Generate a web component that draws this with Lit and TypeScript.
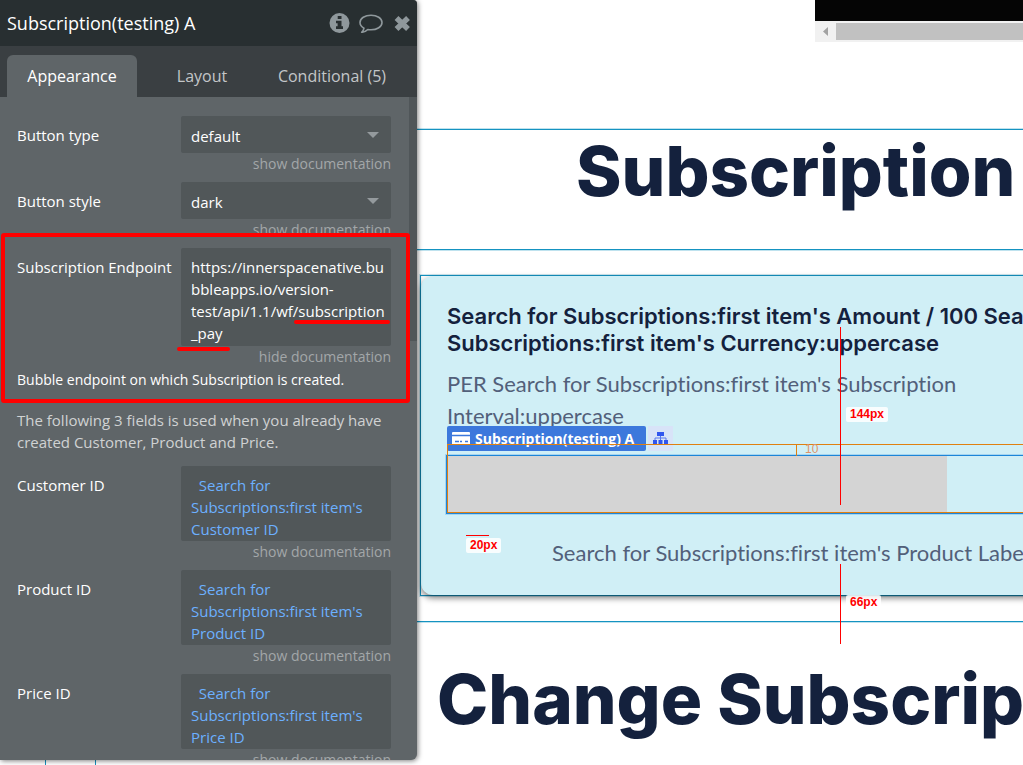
import { LitElement, html, css } from "lit";
import { customElement, property } from "lit/decorators.js";

@customElement("property-editor")
class PropertyEditor extends LitElement {
  static styles = css`
    :host {
      display: flex;
      flex-direction: column;
      position: relative;
      overflow: hidden;
      background: #5f6568;
      border-radius: 0 4px 6px 0;
      box-shadow: 1px 1px 5px rgba(0, 0, 0, 0.5);
      font-family: "Open Sans", sans-serif;
      font-size: 15px;
      line-height: 22px;
      color: #fff;
    }
    * {
      box-sizing: border-box;
    }
    button,
    select,
    textarea {
      font: inherit;
      color: inherit;
      border: 0;
      margin: 0;
      background: none;
    }
    .head {
      display: flex;
      align-items: center;
      height: 46px;
      flex: none;
      padding: 0 5px 0 7px;
      background: #282f31;
    }
    .title {
      flex: 1;
      margin: 0;
      font-size: 18px;
      font-weight: 400;
    }
    .tools {
      display: flex;
      align-items: center;
      gap: 9px;
    }
    .tool {
      display: flex;
      padding: 0;
      color: #8f989c;
    }
    .tabs {
      display: flex;
      align-items: flex-end;
      height: 51px;
      flex: none;
      padding: 0 7px;
      background: #3a3f42;
    }
    .tab {
      width: 130px;
      height: 42px;
      padding: 0;
      font-size: 16px;
      color: #c3c6c8;
      white-space: nowrap;
      border-radius: 6px 6px 0 0;
    }
    .tab.on {
      background: #5f6568;
      color: #fff;
    }
    .body {
      position: relative;
      flex: 1;
      min-height: 0;
      overflow: hidden;
      padding: 19px 26px 0 17px;
    }
    .thumb {
      position: absolute;
      right: 0;
      top: 0;
      width: 8px;
      height: 244px;
      background: #505659;
    }
    .row {
      display: grid;
      grid-template-columns: 164px 1fr;
    }
    .label {
      padding-top: 8px;
      white-space: nowrap;
    }
    .control {
      position: relative;
      display: block;
      height: 37px;
    }
    .select,
    .area {
      display: block;
      width: 100%;
      height: 100%;
      padding: 2px 10px 0;
      background: #515759;
      border-radius: 2px;
      appearance: none;
      outline: none;
    }
    .area {
      padding: 8px 5px 0 10px;
      resize: none;
      overflow: hidden;
    }
    .control.three {
      height: 75px;
    }
    .control.four {
      height: 98px;
    }
    .dynamic {
      color: #6cb0ff;
    }
    .arrow {
      position: absolute;
      right: 12px;
      top: 16px;
      pointer-events: none;
    }
    .doc {
      display: block;
      height: 29px;
      font-size: 14px;
      text-align: right;
      text-decoration: none;
      color: #a3a7a9;
    }
    .doc.open {
      height: 23px;
    }
    .help {
      margin: 0 0 18px;
      font-size: 14px;
    }
    .note {
      margin: 0 0 13px;
      color: #d0d2d3;
    }
    .mark {
      position: absolute;
      pointer-events: none;
    }
    .frame {
      left: 1px;
      top: 233px;
      width: 409px;
      height: 170px;
      border: 4px solid #f00;
      border-radius: 3px;
    }
    .under {
      height: 4px;
      border-radius: 2px;
      background: #f00;
    }
    .under.a {
      left: 294px;
      top: 320px;
      width: 96px;
    }
    .under.b {
      left: 177px;
      top: 347px;
      width: 53px;
    }
  `;

  private choice(id: string, label: string, value: string) {
    return html`<div class="row">
        <label class="label" for=${id}>${label}</label>
        <span class="control">
          <select class="select" id=${id}>
            <option>${value}</option>
          </select>
          <svg class="arrow" width="12" height="7"><path d="M0 0h12l-6 6z" fill="#949a9d" /></svg>
        </span>
      </div>
      <a class="doc" href="#${id}">show documentation</a>`;
  }

  private area(id: string, label: string, value: string, size: string, dynamic = true) {
    return html`<div class="row">
      <label class="label" for=${id}>${label}</label>
      <span class="control ${size}">
        <textarea class="area ${dynamic ? "dynamic" : ""}" id=${id} spellcheck="false" .value=${value}></textarea>
      </span>
    </div>`;
  }

  render() {
    return html`
      <header class="head">
        <h2 class="title">Subscription(testing) A</h2>
        <div class="tools">
          <button class="tool" aria-label="Info">
            <svg width="21" height="20" viewBox="0 0 21 20">
              <circle cx="10.5" cy="10" r="10" fill="currentColor" />
              <path d="M8.7 3h3.800v3H8.700zM7 7.700h5.500v5.600h1.500V16H7v-2.700h1.600v-3H7z" fill="#282f31" />
            </svg>
          </button>
          <button class="tool" aria-label="Comment">
            <svg width="24" height="20" viewBox="0 0 24 20">
              <path
                d="M12 2.200C6 2.200 1 5.300 1 9.500c0 2.400 1.600 4.400 4 5.700-.3 1.600-1.100 2.900-2.300 4.100 2.700-.3 4.600-1.300 6.100-2.800 1 .2 2 .3 3.200.3 6 0 11-3.100 11-7.300S18 2.200 12 2.200z"
                fill="none" stroke="currentColor" stroke-width="1.600" stroke-linejoin="round" />
            </svg>
          </button>
          <button class="tool" aria-label="Close">
            <svg width="20" height="20" viewBox="0 0 20 20">
              <path d="M4.500 5l11.500 11M16 5l-11.500 11" stroke="currentColor" stroke-width="5.500" />
            </svg>
          </button>
        </div>
      </header>
      <nav class="tabs">
        <button class="tab on">Appearance</button>
        <button class="tab">Layout</button>
        <button class="tab">Conditional (5)</button>
      </nav>
      <div class="body">
        ${this.choice("type", "Button type", "default")}
        ${this.choice("style", "Button style", "dark")}
        ${this.area("endpoint", "Subscription Endpoint", "https://innerspacenative.bubbleapps.io/version-test/api/1.1/wf/subscription_pay", "four", false)}
        <a class="doc open" href="#endpoint">hide documentation</a>
        <p class="help">Bubble endpoint on which Subscription is created.</p>
        <p class="note">The following 3 fields is used when you already have created Customer, Product and Price.</p>
        ${["Customer ID", "Product ID", "Price ID"].map((name) => {
          const id = name.split(" ")[0].toLowerCase();
          return html`${this.area(id, name, `\u00a0 Search for Subscriptions:first item's ${name}`, "three")}
            <a class="doc" href="#${id}">show documentation</a>`;
        })}
        <div class="thumb"></div>
      </div>
      <div class="mark frame"></div>
      <div class="mark under a"></div>
      <div class="mark under b"></div>
    `;
  }
}

@customElement("design-canvas")
class DesignCanvas extends LitElement {
  static styles = css`
    :host {
      display: block;
      position: relative;
      overflow: hidden;
      background: #fff;
      color: #14213d;
      font-family: Inter, sans-serif;
    }
    * {
      box-sizing: border-box;
    }
    .top {
      height: 129px;
      display: flex;
      flex-direction: column;
      align-items: flex-end;
    }
    .embed {
      width: 208px;
      height: 21px;
      background: #050505;
    }
    .scroll {
      display: flex;
      align-items: center;
      width: 208px;
      height: 21px;
      background: #f1f1f1;
    }
    .left {
      display: flex;
      width: 21px;
      height: 21px;
      padding: 6px 8px;
      border: 0;
      background: none;
    }
    .bar {
      flex: 1;
      height: 17px;
      background: #c1c1c1;
    }
    .hero {
      height: 121px;
      border-top: 1px solid #1593c1;
      border-bottom: 1px solid #1593c1;
      box-shadow: 0 -1px 0 #bfe2ee, 0 1px 0 #bfe2ee;
      padding-left: 159px;
    }
    .big {
      margin: 0;
      font-size: 69px;
      line-height: 82px;
      font-weight: 800;
      white-space: nowrap;
    }
    .section {
      padding: 25px 0 25px 3px;
      border-bottom: 1px solid #1593c1;
      box-shadow: 0 1px 0 #bfe2ee;
    }
    .outline {
      width: 840px;
      height: 321px;
      border: 1px solid #1593c1;
      box-shadow: 0 0 0 1px #cde6ef;
    }
    .card {
      height: 319px;
      padding: 27px 26px 0;
      border-radius: 12px;
      background: #d0eff6;
      box-shadow: 0 3px 6px rgba(0, 0, 0, 0.5);
      white-space: nowrap;
    }
    .price {
      margin: 0;
      font-size: 22px;
      line-height: 27px;
      font-weight: 600;
    }
    .per {
      margin: 11px 0 0;
      font-family: Lato, sans-serif;
      font-size: 22px;
      line-height: 32px;
      font-variant-ligatures: none;
      color: #52607a;
    }
    .slot {
      margin: 23px 0 0 -1px;
      height: 59px;
      border: 1px solid #1c85d8;
      box-shadow: 0 0 0 1px #a5d5f0;
    }
    .pay {
      display: block;
      width: 500px;
      height: 57px;
      border: 0;
      background: #d4d4d4;
    }
    .product {
      margin: 22px 0 0 105px;
      font-family: Lato, sans-serif;
      font-size: 22px;
      line-height: 34px;
      font-variant-ligatures: none;
      color: #52607a;
    }
    .next {
      padding: 36px 0 0 20px;
    }
    .over {
      position: absolute;
    }
    .tag {
      left: 30px;
      top: 426px;
      display: flex;
      align-items: center;
      gap: 5px;
      height: 25px;
      padding: 0 12px 0 5px;
      border-radius: 2px;
      background: #3c78dc;
      color: #fff;
      font: 700 14px/25px "Open Sans", sans-serif;
    }
    .tree {
      left: 231px;
      top: 426px;
      width: 25px;
      height: 25px;
      padding: 5px 4px;
      border: 0;
      background: #d8e3f8;
    }
    .spacing {
      left: 30px;
      top: 444px;
      width: 820px;
      height: 69px;
      border: 1px solid #e08010;
    }
    .gap {
      left: 379px;
      top: 445px;
      height: 11px;
      padding-left: 8px;
      border-left: 1px solid #e08010;
      font: 12px/8px "Liberation Sans", sans-serif;
      color: #df9368;
    }
    .rule {
      background: #f00;
    }
    .r1 {
      left: 423px;
      top: 327px;
      width: 1px;
      height: 178px;
    }
    .r2 {
      left: 423px;
      top: 564px;
      width: 1px;
      height: 80px;
    }
    .r3 {
      left: 49px;
      top: 535px;
      width: 23px;
      height: 1px;
    }
    .px {
      padding: 0 4px;
      border-radius: 2px;
      background: rgba(255, 255, 255, 0.85);
      color: #f00;
      font: 700 12px/15px "Liberation Sans", sans-serif;
    }
    .p1 {
      left: 429px;
      top: 407px;
    }
    .p2 {
      left: 429px;
      top: 595px;
    }
    .p3 {
      left: 49px;
      top: 538px;
    }
  `;

  @property({ type: String }) name = "Subscription(testing) A";

  render() {
    return html`
      <div class="top">
        <div class="embed"></div>
        <div class="scroll">
          <button class="left" aria-label="Scroll left">
            <svg width="5" height="9"><path d="M5 0v9L0 4.500z" fill="#a3a3a3" /></svg>
          </button>
          <div class="bar"></div>
        </div>
      </div>
      <div class="hero"><h1 class="big">Subscription</h1></div>
      <div class="section">
        <div class="outline">
          <div class="card">
            <p class="price">
              Search for Subscriptions:first item's Amount / 100 Search for<br />Subscriptions:first item's
              Currency:uppercase
            </p>
            <p class="per">PER Search for Subscriptions:first item's Subscription<br />Interval:uppercase</p>
            <div class="slot"><button class="pay" aria-label="Subscribe"></button></div>
            <p class="product">Search for Subscriptions:first item's Product Label</p>
          </div>
        </div>
      </div>
      <div class="next"><h1 class="big">Change Subscription</h1></div>

      <div class="over tag">
        <svg width="18" height="13" viewBox="0 0 18 13">
          <rect width="18" height="13" rx="1" fill="#fff" />
          <path d="M0 3.500h18M3 9.500h4M8 9.500h2M13 9.500h3" stroke="#3c78dc" stroke-width="1.500" />
        </svg>
        <span>${this.name}</span>
      </div>
      <button class="over tree" aria-label="Element tree">
        <svg width="17" height="14" viewBox="0 0 17 14">
          <path d="M5 1h7v4H5zM1 9h4v4H1zM6.500 9h4v4h-4zM12 9h4v4h-4z" fill="#3156ee" />
          <path d="M8.500 5v4M3 9V7h11v2" fill="none" stroke="#5b78ee" />
        </svg>
      </button>
      <div class="over spacing"></div>
      <div class="over gap">10</div>
      <div class="over rule r1"></div>
      <div class="over rule r2"></div>
      <div class="over rule r3"></div>
      <span class="over px p1">144px</span>
      <span class="over px p2">66px</span>
      <span class="over px p3">20px</span>
    `;
  }
}

@customElement("app-root")
class AppRoot extends LitElement {
  static styles = css`
    :host {
      display: grid;
      grid-template-columns: 417px 1fr;
      grid-template-rows: 1fr 5px;
      height: 100vh;
      overflow: hidden;
      background: #fff;
    }
    .editor {
      z-index: 1;
      min-height: 0;
    }
    .canvas {
      grid-column: 2;
      grid-row: 1 / 3;
      min-width: 0;
    }
    .below {
      display: flex;
      grid-column: 1;
      grid-row: 2;
    }
    .cell {
      box-sizing: border-box;
      width: 46px;
      border-right: 1px solid #1593c1;
    }
    .cell.wide {
      width: 50px;
    }
  `;

  render() {
    return html`
      <property-editor class="editor"></property-editor>
      <design-canvas class="canvas"></design-canvas>
      <div class="below">
        <span class="cell"></span>
        <span class="cell wide"></span>
      </div>
    `;
  }
}
